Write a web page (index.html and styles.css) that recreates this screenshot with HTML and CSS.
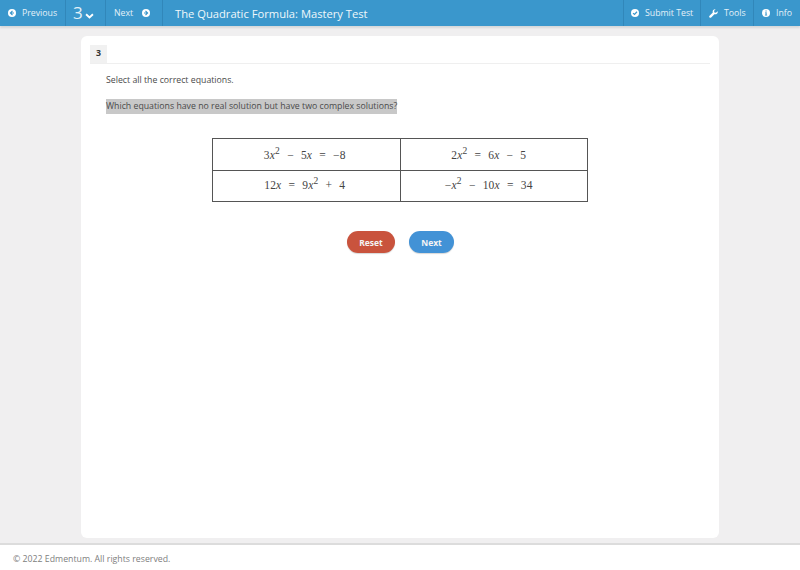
FILE: index.html
```html
<!DOCTYPE html>
<html lang="en">
    <head>
        <meta charset="UTF-8">
        <title>The Quadratic Formula: Mastery Test</title>
        <link rel="stylesheet" href="styles.css">
    </head>

    <body class="test">
        <header class="test__bar">
            <a class="test__bar__item test__bar__item--previous">
                <svg class="test__bar__icon" viewBox="0 0 16 16"><circle cx="8" cy="8" r="8" fill="#fff"/><path d="M9 3.8 4.8 8 9 12.2M5.5 8H12" fill="none" stroke="#3a97cc" stroke-width="2.4"/></svg>
                Previous
            </a>
            <a class="test__bar__item test__bar__item--number">
                <span class="test__bar__number">3</span>
                <svg class="test__bar__chevron" viewBox="0 0 10 7"><path d="M1 1.5 5 5.2 9 1.5" fill="none" stroke="#fff" stroke-width="2.2"/></svg>
            </a>
            <a class="test__bar__item test__bar__item--next">
                Next
                <svg class="test__bar__icon" viewBox="0 0 16 16"><circle cx="8" cy="8" r="8" fill="#fff"/><path d="M7 3.8 11.2 8 7 12.2M10.5 8H4" fill="none" stroke="#3a97cc" stroke-width="2.4"/></svg>
            </a>
            <div class="test__bar__title">The Quadratic Formula: Mastery Test</div>
            <a class="test__bar__item test__bar__item--submit">
                <svg class="test__bar__icon" viewBox="0 0 16 16"><circle cx="8" cy="8" r="8" fill="#fff"/><path d="M4 8.2 7 11 12 5.5" fill="none" stroke="#3a97cc" stroke-width="2.4"/></svg>
                Submit Test
            </a>
            <a class="test__bar__item test__bar__item--tools">
                <svg class="test__bar__icon test__bar__icon--tools" viewBox="0 0 16 16"><path d="M15.500 4.200a4.400 4.400 0 0 1-5.900 5L3.900 15a2 2 0 0 1-2.900-2.900l5.800-5.700a4.400 4.400 0 0 1 5-5.900L9 3.300l.5 2.700 2.700.5z" fill="#fff"/></svg>
                Tools
            </a>
            <a class="test__bar__item test__bar__item--info">
                <svg class="test__bar__icon" viewBox="0 0 16 16"><circle cx="8" cy="8" r="8" fill="#fff"/><path d="M6.500 6.500H9.300V11.500H10.300V13H5.800V11.500H6.900V8H6.500zM6.900 2.800H9.300V5.200H6.900z" fill="#3a97cc"/></svg>
                Info
            </a>
        </header>

        <main class="test__content">
            <section class="question">
                <div class="question__tab">
                    <span class="question__tab__number">3</span>
                </div>

                <div class="question__body">
                    <p class="question__prompt">Select all the correct equations.</p>
                    <p class="question__text"><span class="question__text__mark">Which equations have no real solution but have two complex solutions?</span></p>

                    <table class="question__table">
                        <tbody>
                            <tr>
                                <td class="question__table__cell">3<i>x</i><sup>2</sup> &minus; 5<i>x</i> = &minus;8</td>
                                <td class="question__table__cell question__table__cell--right">2<i>x</i><sup>2</sup> = 6<i>x</i> &minus; 5</td>
                            </tr>
                            <tr>
                                <td class="question__table__cell">12<i>x</i> = 9<i>x</i><sup>2</sup> + 4</td>
                                <td class="question__table__cell question__table__cell--right">&minus;<i>x</i><sup>2</sup> &minus; 10<i>x</i> = 34</td>
                            </tr>
                        </tbody>
                    </table>

                    <div class="question__actions">
                        <button class="question__button question__button--reset">Reset</button>
                        <button class="question__button question__button--next">Next</button>
                    </div>
                </div>
            </section>
        </main>

        <footer class="test__footer">&copy; 2022 Edmentum. All rights reserved.</footer>
    </body>
</html>
```
FILE: styles.css
```css
html,
body {
    height: 100%;
    margin: 0;
    padding: 0;
}

:root {
    --color-bar: #3a97cc;
    --color-bar-line: #3187ba;
    --color-page: #f0eff0;
    --color-text: #4a4a4a;
}

.test {
    background-color: var(--color-page);
    color: var(--color-text);
    display: flex;
    flex-direction: column;
    font-family: "Open Sans", sans-serif;
    height: 570px;
    overflow: hidden;
}

.test__bar {
    align-items: stretch;
    background-color: var(--color-bar);
    box-shadow: 0 2px 2px #d5d8da;
    color: #e4f1f8;
    display: flex;
    flex: none;
    font-size: 8.75px;
    height: 26px;
}

.test__bar__item {
    align-items: center;
    border-right: 1px solid var(--color-bar-line);
    box-sizing: border-box;
    display: flex;
    gap: 6px;
}

.test__bar__item--previous {
    padding-left: 8px;
    width: 66px;
}

.test__bar__item--number {
    gap: 2px;
    padding-left: 7px;
    width: 40px;
}

.test__bar__item--next {
    gap: 9px;
    padding-left: 8px;
    width: 57px;
}

.test__bar__item--submit {
    border-left: 1px solid var(--color-bar-line);
    padding-left: 7px;
    width: 78px;
}

.test__bar__item--tools {
    padding-left: 8px;
    width: 53px;
}

.test__bar__item--info {
    border-right: none;
    padding-left: 8px;
    width: 46px;
}

.test__bar__icon {
    flex: none;
    height: 8px;
    width: 8px;
}

.test__bar__icon--tools {
    height: 9px;
    width: 9px;
}

.test__bar__number {
    font-size: 17px;
    line-height: 26px;
}

.test__bar__chevron {
    height: 6px;
    margin-top: 5px;
    width: 9px;
}

.test__bar__title {
    align-self: center;
    color: #f0f7fb;
    flex: 1;
    font-size: 11.2px;
    padding-left: 12px;
}

.test__content {
    flex: 1;
    min-height: 0;
    padding: 10px 81px 5px 81px;
}

.question {
    background-color: #ffffff;
    border-radius: 6px;
    box-sizing: border-box;
    height: 100%;
    padding-top: 9px;
}

.question__tab {
    border-bottom: 1px solid #efefef;
    height: 18px;
    margin: 0 9px;
}

.question__tab__number {
    background-color: #f1f1f1;
    color: #333333;
    display: block;
    font-size: 8.75px;
    font-weight: 700;
    height: 18px;
    line-height: 17px;
    text-align: center;
    width: 17px;
}

.question__body {
    padding: 0 25px;
}

.question__prompt {
    font-size: 8.75px;
    line-height: 12px;
    margin: 10px 0 0 0;
}

.question__text {
    font-size: 8.75px;
    line-height: 15px;
    margin: 13px 0 0 0;
}

.question__text__mark {
    background-color: #c8c8c8;
    display: inline-block;
    vertical-align: top;
}

.question__table {
    border-collapse: collapse;
    margin: 24px 0 0 106px;
    table-layout: fixed;
    width: 376px;
}

.question__table__cell {
    border: 1px solid #555555;
    color: #444444;
    font-family: "Liberation Serif", serif;
    font-size: 11.5px;
    height: 29.5px;
    letter-spacing: 0.2px;
    padding: 0 3px 0 0;
    text-align: center;
    word-spacing: 4px;
}

.question__table__cell--right {
    padding-right: 10px;
}

.question__table tr:first-child .question__table__cell {
    padding-top: 1px;
}

.question__table tr:last-child .question__table__cell {
    padding-bottom: 1px;
}

.question__table__cell sup {
    font-size: 9.5px;
    line-height: 0;
}

.question__actions {
    display: flex;
    gap: 14px;
    justify-content: center;
    margin: 29px 0 0 1px;
}

.question__button {
    border: none;
    border-radius: 11px;
    box-shadow: 0 1px 1px #d8d8d8;
    color: #f4f4f4;
    font-family: "Open Sans", sans-serif;
    font-size: 8.5px;
    font-weight: 700;
    height: 22px;
    padding: 0;
}

.question__button--reset {
    background-color: #c9533d;
    width: 48px;
}

.question__button--next {
    background-color: #4292d6;
    width: 45px;
}

.test__footer {
    background-color: #ffffff;
    border-top: 2px solid #dcdcdc;
    color: #808080;
    flex: none;
    font-size: 8.75px;
    height: 24px;
    line-height: 26px;
    padding-left: 13px;
    padding-top: 1px;
}
```
